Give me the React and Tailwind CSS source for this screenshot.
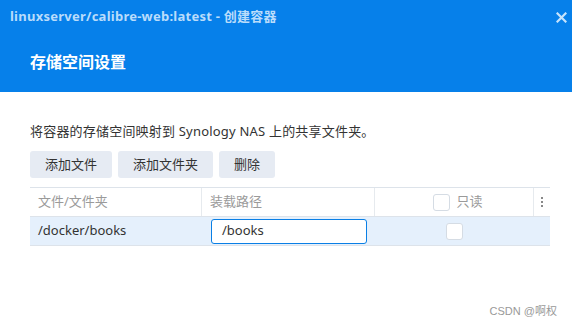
import React from "react";

export default function App() {
  const font = { fontFamily: '"Noto Sans", "Noto Sans CJK SC", sans-serif' };
  return (
    <div className="relative w-[572px] h-[327px] bg-white overflow-hidden" style={font}>
      <div className="h-[92px] bg-[#0680ea] flex flex-col">
        <div className="h-[33px] flex items-center justify-between pl-[10px] pr-[5px]">
          <span className="text-[13px] font-bold text-[#b9dcfb] leading-none tracking-[0.25px]">
            linuxserver/calibre-web:latest - 创建容器
          </span>
          <svg width="11" height="11" viewBox="0 0 11 11" className="mt-[1px]">
            <path d="M1.5 1.5 L9.5 9.5 M9.5 1.5 L1.5 9.5" stroke="#c6e3fc" strokeWidth="2.2" strokeLinecap="square" />
          </svg>
        </div>
        <div className="pl-[30px] mt-[19px] text-[16px] font-bold text-white leading-[20px]">
          存储空间设置
        </div>
      </div>
      <div className="px-[30px] pt-[31px]">
        <div className="text-[13px] leading-[16px] text-[#333] tracking-[0.2px]">
          将容器的存储空间映射到 Synology NAS 上的共享文件夹。
        </div>
        <div className="flex gap-[6px] mt-[12px]">
          <button className="h-[27px] px-[15px] rounded-[3px] bg-[#e6ebf3] text-[13px] text-[#333] leading-none">添加文件</button>
          <button className="h-[27px] px-[15px] rounded-[3px] bg-[#e6ebf3] text-[13px] text-[#333] leading-none">添加文件夹</button>
          <button className="h-[27px] px-[15px] rounded-[3px] bg-[#e6ebf3] text-[13px] text-[#333] leading-none">删除</button>
        </div>
        <div className="mt-[9px] w-[520px] border-t border-[#dde3ea]">
          <div className="flex h-[29px] border-b border-[#dde3ea] text-[13px] text-[#9a9a9a]">
            <div className="w-[172px] border-r border-[#e6eaee] flex items-center pl-[8px]">文件/文件夹</div>
            <div className="w-[173px] border-r border-[#e6eaee] flex items-center pl-[8px]">装载路径</div>
            <div className="w-[159px] border-r border-[#e6eaee] flex items-center justify-center gap-[6px] pl-[8px]">
              <span className="w-[17px] h-[17px] rounded-[3px] border border-[#d5dce4] bg-white"></span>
              <span>只读</span>
            </div>
            <div className="flex-1 flex flex-col items-center justify-center gap-[2px]">
              <span className="w-[2px] h-[2px] bg-[#888]"></span>
              <span className="w-[2px] h-[2px] bg-[#888]"></span>
              <span className="w-[2px] h-[2px] bg-[#888]"></span>
            </div>
          </div>
          <div className="flex h-[29px] bg-[#e5f0fc] border-b border-[#dde3ea] text-[13px] text-[#333]">
            <div className="w-[172px] flex items-center pl-[8px]">/docker/books</div>
            <div className="w-[173px] flex items-center pl-[9px]">
              <div className="w-[156px] h-[25px] rounded-[3px] border border-[#0a7fe5] bg-white flex items-center pl-[10px]">
                /books
              </div>
            </div>
            <div className="w-[159px] flex items-center justify-center">
              <span className="w-[17px] h-[17px] rounded-[3px] border border-[#d5dce4] bg-white"></span>
            </div>
          </div>
        </div>
      </div>
      <div className="absolute right-[15px] bottom-[8px] text-[11px] text-[#999]" style={{ fontFamily: '"Liberation Sans", "Noto Sans CJK SC", sans-serif' }}>
        CSDN @啊权
      </div>
    </div>
  );
}
